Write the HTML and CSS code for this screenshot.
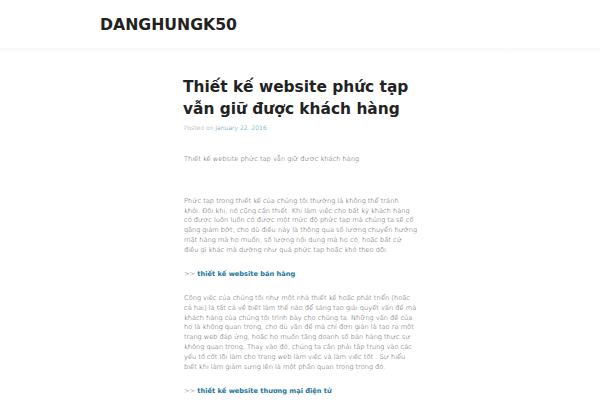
FILE: index.html
```html
<!DOCTYPE html>
<html lang="vi">
<head>
<meta charset="utf-8">
<title>DANGHUNGK50</title>
<link rel="stylesheet" href="styles.css">
</head>
<body>
<header class="site-header">
  <div class="header-inner">
    <h1 class="site-title">DANGHUNGK50</h1>
  </div>
</header>
<main class="site-main">
  <article class="entry">
    <h2 class="entry-title">Thiết kế website phức tạp vẫn giữ được khách hàng</h2>
    <div class="entry-meta">Posted on <a href="#">January 22, 2016</a></div>
    <div class="entry-content">
      <p class="lead">Thiết kế website phức tạp vẫn giữ được khách hàng</p>
      <p>Phức tạp trong thiết kế của chúng tôi thường là không thể tránh<br>
      khỏi. Đôi khi, nó cũng cần thiết. Khi làm việc cho bất kỳ khách hàng<br>
      có được luôn luôn có được một mức độ phức tạp mà chúng ta sẽ cố<br>
      gắng giảm bớt, cho dù điều này là thông qua số lượng chuyển hướng<br>
      mặt hàng mà họ muốn, số lượng nội dung mà họ có, hoặc bất cứ<br>
      điều gì khác mà dường như quá phức tạp hoặc khó theo dõi.</p>
      <p>&gt;&gt; <a class="strong-link" href="#">thiết kế website bán hàng</a></p>
      <p>Công việc của chúng tôi như một nhà thiết kế hoặc phát triển (hoặc<br>
      cả hai) là tất cả về biết làm thế nào để sáng tạo giải quyết vấn đề mà<br>
      khách hàng của chúng tôi trình bày cho chúng ta. Những vấn đề của<br>
      họ là không quan trọng, cho dù vấn đề mà chỉ đơn giản là tạo ra một<br>
      trang web đáp ứng, hoặc họ muốn tăng doanh số bán hàng thực sự<br>
      không quan trọng. Thay vào đó, chúng ta cần phải tập trung vào các<br>
      yếu tố cốt lõi làm cho trang web làm việc và làm việc tốt . Sự hiểu<br>
      biết khi làm giảm sưng lên là một phần quan trọng trong đó.</p>
      <p>&gt;&gt; <a class="strong-link" href="#">thiết kế website thương mại điện tử</a></p>
    </div>
  </article>
</main>
</body>
</html>
```

FILE: styles.css
```css
html, body {
  margin: 0;
  padding: 0;
  background: #fff;
  font-family: "DejaVu Sans", "Noto Sans", sans-serif;
  color: #444;
}
.site-header {
  height: 48px;
  background: #fff;
}
.header-inner {
  width: 400px;
  margin: 0 auto;
  padding-top: 15px;
}
.site-title {
  margin: 0;
  font-size: 15.7px;
  font-weight: bold;
  color: #222;
  line-height: 20px;
}
.site-main {
  background: linear-gradient(#f7f7f7, #fff 6px);
  padding-top: 28px;
}
.entry {
  width: 236px;
  margin: 0 auto;
  padding-left: 4px;
}
.entry-title {
  margin: 0 0 0 -1px;
  font-size: 15.4px;
  line-height: 22px;
  font-weight: bold;
  color: #222;
}
.entry-meta {
  margin-top: 4px;
  font-size: 6px;
  line-height: 8px;
  font-weight: 200;
  color: #888;
}
.entry-meta a {
  color: #21759b;
  text-decoration: none;
}
.entry-content {
  margin-top: 23px;
  font-size: 6.65px;
  font-weight: 200;
  line-height: 9.8px;
  color: #444;
}
.entry-content p {
  margin: 0 0 14.3px;
}
.entry-content .lead {
  margin-bottom: 32px;
}
.strong-link {
  color: #21759b;
  font-weight: bold;
  text-decoration: none;
}
```
